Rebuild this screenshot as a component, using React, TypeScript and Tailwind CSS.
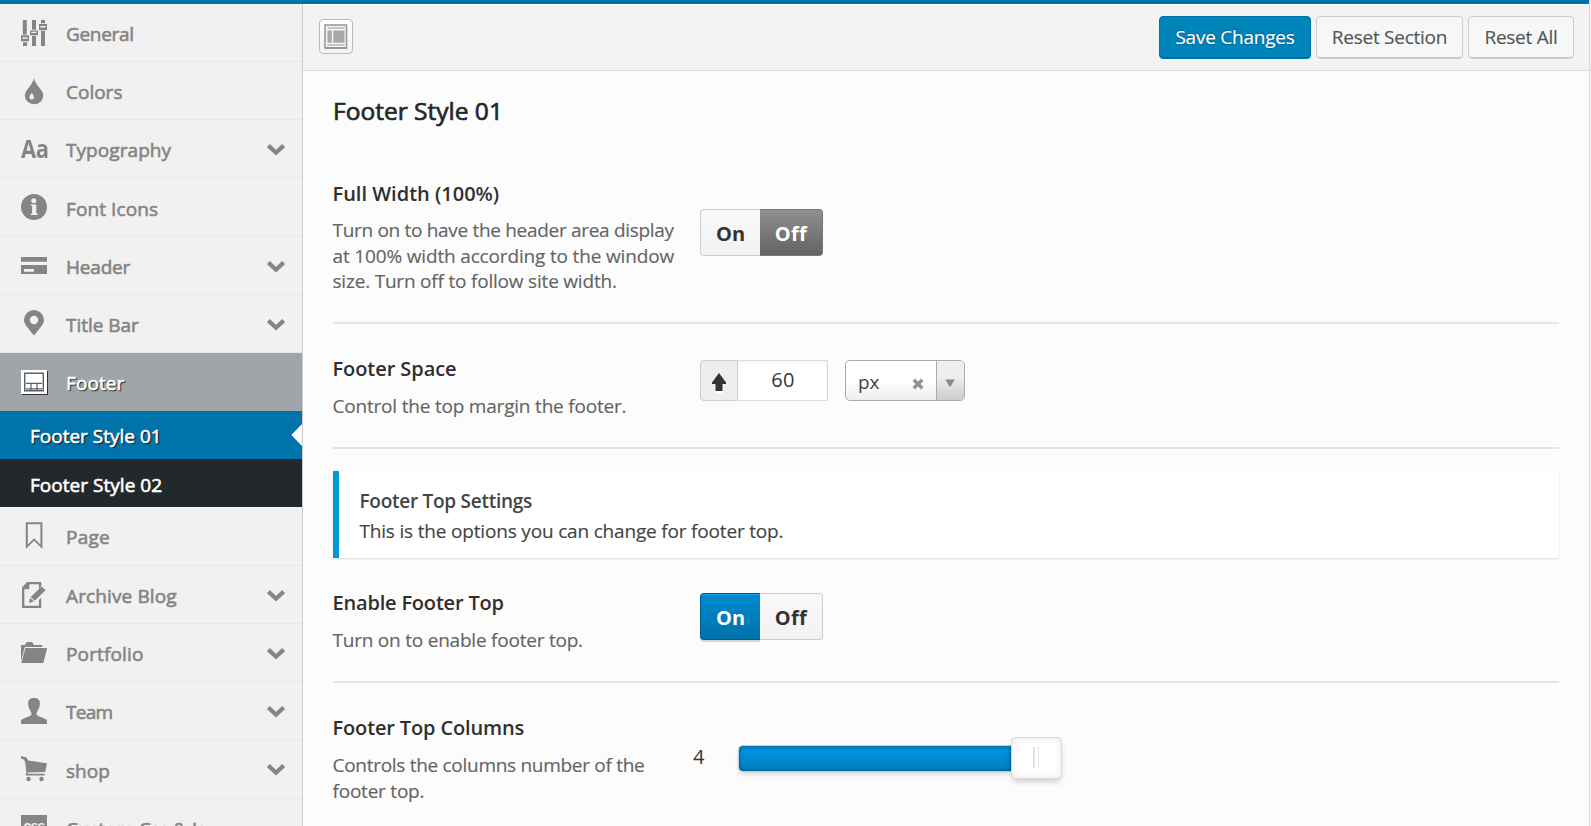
import React, { useState } from "react";

type IconProps = { children: React.ReactNode; className?: string };

function Glyph({ children, className = "" }: IconProps) {
  return (
    <svg width="26" height="26" viewBox="0 0 26 26" fill="currentColor" className={"block overflow-visible " + className}>
      {children}
    </svg>
  );
}

const icons = {
  sliders: (
    <Glyph>
      <path
        fillRule="evenodd"
        d="M1.8 0h4v14.4h-4zM0 15.2h8v6H0zM1.5 17.3v1.4h5v-1.4zM2 22.2h4V26H2zM11 0h4v9.8h-4zM9 10.4h8v4.9H9zM10.3 11.8v1.3h5.2v-1.3zM11 16h4v10h-4zM20 0h4v3.2h-4zM18 4h8v6.2h-8zM19.3 6v1.4h5.2V6zM20 11h4v15h-4z"
      />
    </Glyph>
  ),
  drop: (
    <Glyph>
      <path
        fillRule="evenodd"
        d="M13 0C13.6 3.6 16 7 19 10.6 21.3 13.4 22.3 15.2 22.3 17.4A9.2 8.8 0 0 1 13 26.200A9.200 8.800 0 0 1 3.800 17.400C3.800 15.200 4.800 13.400 7 10.600 10 7 12.400 3.600 13 0zM10.800 14.400C10.500 16 8.400 17.200 8.400 19.200A2.300 2.300 0 0 0 13 19.200C13 17.200 11.100 16 10.800 14.400z"
      />
    </Glyph>
  ),
  type: (
    <span className="-mt-[5px] block w-[27px] font-['Open_Sans',sans-serif] text-[25.5px] leading-[34px] font-bold tracking-[-0.5px]">
      <span className="inline-block origin-left scale-x-[0.86]">Aa</span>
    </span>
  ),
  info: (
    <Glyph>
      <path
        fillRule="evenodd"
        d="M13 0a13 13 0 1 0 0 26a13 13 0 0 0 0-26zM12.800 4.200a2.500 2.500 0 1 1 0 5a2.500 2.500 0 0 1 0-5zM9.600 10.400h5.700v8.800l1.300.8v.9H9.600V20l1.500-.8v-7.100l-1.500-.7z"
      />
    </Glyph>
  ),
  card: (
    <Glyph>
      <path fillRule="evenodd" d="M0 4h26v4.800H0zM0 12h26v9H0zM3 16v2.700h10V16z" />
    </Glyph>
  ),
  pin: (
    <Glyph className="-mt-px">
      <path
        fillRule="evenodd"
        d="M13 0a10 10 0 0 1 10 10C23 14.400 19.500 17 13 25.600 6.500 17 3 14.400 3 10A10 10 0 0 1 13 0zM13 5.800a4.200 4.200 0 1 0 0 8.400a4.200 4.200 0 0 0 0-8.400z"
      />
    </Glyph>
  ),
  footer: (
    <Glyph className="drop-shadow-[1px_1px_0.5px_#333]">
      <path d="M0 1h26v24H0z" />
      <path fill="none" stroke="#5c6064" strokeWidth="1.4" d="M3.700 4.200h18.600v17.600H3.700z" />
      <path stroke="#5c6064" strokeWidth="1.200" d="M5 14.400h16M5 19.800h16M10 15v6M16 15v6" />
    </Glyph>
  ),
  bookmark: (
    <Glyph>
      <path fillRule="evenodd" d="M4.800-.8h16.600V26L13.100 17.800 4.800 26zM6.800 1.200v20.200l6.300-6.200 6.300 6.200V1.200z" />
    </Glyph>
  ),
  edit: (
    <Glyph>
      <path
        fillRule="evenodd"
        d="M6 0h14.200v4.600l-2.300 2.300V2.300H8.300v4.900H3.300v16.500h14.600v-5.600l2.300-2.400V26H1V5.400z"
      />
      <path d="M20.600 4.400l3.900 3.900L13.700 18.700l-4-3.800zM9 15.700l3.900 3.800L8 21z" />
    </Glyph>
  ),
  folder: (
    <Glyph className="translate-y-[2px]">
      <path d="M0 4.300C0 3.300.5 3 1.300 3h2.500L5 1.200C5.500.3 6 0 6.800 0h3.400c1 0 1.500.3 1.900 1.200L12.700 3h8.600v2H3.800L.5 17.500H0z" />
      <path d="M4.400 6h21.800l-3.900 15H.3z" />
    </Glyph>
  ),
  user: (
    <Glyph>
      <path d="M13 0c3.800 0 5.900 1.800 5.900 5.400 0 3.400-1.600 6.300-3 8.800-.9 1.700-.4 3 1.300 3.800l5.600 2.300c2.300.9 3.200 1.600 3.200 2.900V26H0v-2.800c0-1.300.9-2 3.200-2.900L8.800 18c1.700-.8 2.200-2.100 1.300-3.800-1.400-2.500-3-5.400-3-8.800C7.100 1.800 9.200 0 13 0z" />
    </Glyph>
  ),
  cart: (
    <Glyph>
      <path d="M0 0l5.600 1.500L7 4.500 26 7.300 24.200 16 6.500 16.600l.4 1.100h16.800v1.900H4.600l.7-3.300L4.300 7 3.200 3.700 0 2.400z" />
      <circle cx="7.600" cy="23" r="2.200" />
      <circle cx="20.500" cy="23" r="2.200" />
    </Glyph>
  ),
  css: (
    <span className="block h-[26px] w-[26px] bg-current text-center font-['Liberation_Sans',sans-serif] text-[14px] leading-[23px] font-bold tracking-[-0.8px]">
      <span className="text-[#f1f1f1]">css</span>
    </span>
  ),
};

type Item = { label: string; icon: keyof typeof icons; more?: boolean; row: string; track: string };

const before: Item[] = [
  { label: "General", icon: "sliders", row: "h-[58px]", track: "tracking-[-0.33px]" },
  { label: "Colors", icon: "drop", row: "h-[58px]", track: "" },
  { label: "Typography", icon: "type", more: true, row: "h-[58px]", track: "tracking-[0.07px]" },
  { label: "Font Icons", icon: "info", row: "h-[59px]", track: "pt-px tracking-[0.1px]" },
  { label: "Header", icon: "card", more: true, row: "h-[58px]", track: "tracking-[-0.2px]" },
  { label: "Title Bar", icon: "pin", more: true, row: "h-[58px]", track: "tracking-[-0.03px]" },
];

const after: Item[] = [
  { label: "Page", icon: "bookmark", row: "h-[59px]", track: "tracking-[0.2px]" },
  { label: "Archive Blog", icon: "edit", more: true, row: "h-[58px]", track: "tracking-[0.12px]" },
  { label: "Portfolio", icon: "folder", more: true, row: "h-[58px]", track: "tracking-[0.15px]" },
  { label: "Team", icon: "user", more: true, row: "h-[58px]", track: "tracking-[-0.7px]" },
  { label: "shop", icon: "cart", more: true, row: "h-[59px]", track: "pt-px" },
  { label: "Custom Css & Js", icon: "css", row: "h-[58px]", track: "tracking-[-0.1px]" },
];

function Chevron() {
  return (
    <svg width="18" height="12" viewBox="0 0 18 12" className="mt-[7.5px] block">
      <path d="M1.400 1.600L9 8.700l7.600-7.100" fill="none" stroke="currentColor" strokeWidth="4.200" />
    </svg>
  );
}

function MenuRow({ item }: { item: Item }) {
  return (
    <li className={"flex shrink-0 items-start border-b border-[#e7e7e7] pt-4 pr-[17px] pl-[21px] text-[#858585] " + item.row}>
      <span className="w-[45px] shrink-0">{icons[item.icon]}</span>
      <span className={"mt-px flex-1 text-[19px] leading-[26px] [-webkit-text-stroke:0.6px] " + item.track}>{item.label}</span>
      {item.more && <Chevron />}
    </li>
  );
}

function Sidebar() {
  return (
    <nav className="w-[303px] shrink-0 overflow-hidden border-r border-[#ccc] bg-[#f1f1f1]">
      <ul className="flex flex-col">
        {before.map((i) => (
          <MenuRow key={i.label} item={i} />
        ))}
        <li className="shrink-0">
          <div className="flex h-[58px] items-start bg-[#a0a5a9] pt-4 pl-[21px] text-white">
            <span className="w-[45px] shrink-0">{icons.footer}</span>
            <span className="mt-px text-[19px] leading-[26px] tracking-[0.1px] [-webkit-text-stroke:0.6px] [text-shadow:1px_1px_1px_#222,1px_1px_1px_#333]">
              Footer
            </span>
          </div>
          <div className="flex h-12 items-center justify-between bg-[#0073aa] pl-[30px] text-[19px] text-white">
            <span className="pt-[2px] [-webkit-text-stroke:0.6px] [text-shadow:1px_1px_1px_#111,1px_1px_1px_#222]">Footer Style 01</span>
            <svg width="11" height="22" viewBox="0 0 11 22" className="block">
              <path d="M11 0v22L.3 11z" fill="#fcfcfc" />
            </svg>
          </div>
          <div className="flex h-12 items-center bg-[#23282d] pt-[4px] pl-[30px] text-[19px] text-white">
            <span className="tracking-[0.03px] [-webkit-text-stroke:0.6px]">Footer Style 02</span>
          </div>
        </li>
        {after.map((i) => (
          <MenuRow key={i.label} item={i} />
        ))}
      </ul>
    </nav>
  );
}

function ExpandIcon() {
  return (
    <svg width="24" height="25" viewBox="0 0 24 25" className="block">
      <rect x="1" y="1" width="21.500" height="23" fill="#f4f4f4" stroke="#9b9b9b" strokeWidth="1.600" />
      <path d="M1 24h21.500" stroke="#888" strokeWidth="1.200" />
      <path d="M3.500 4h17M3.500 21h17" stroke="#b5b5b5" strokeWidth="1.400" />
      <path d="M3.500 6.500h4.300v12.300H3.500zM9.300 6.500h11.200v12.300H9.300z" fill="#a8a8a8" />
    </svg>
  );
}

function Toolbar() {
  const plain =
    "h-[43px] rounded-[4px] border border-[#ccc] bg-[#f7f7f7] text-[19px] text-[#555] tracking-[-0.25px] shadow-[inset_0_-1px_0_#ccc] [-webkit-text-stroke:0.15px]";
  return (
    <header className="flex h-[67px] shrink-0 items-start justify-between border-t border-b border-t-white border-b-[#dedede] bg-[#f3f3f3] pt-[11px] pr-[15px] pl-4">
      <button className="mt-[3px] flex h-[35px] w-[34px] items-center justify-center rounded-[4px] border border-[#bbb] bg-gradient-to-b from-white to-[#f3f3f3]">
        <ExpandIcon />
      </button>
      <div className="flex gap-[5px]">
        <button className="h-[43px] w-[152px] rounded-[4px] border border-[#0073aa] bg-[#0085ba] text-[19px] tracking-[-0.23px] text-white shadow-[inset_0_-1px_0_#006799] [-webkit-text-stroke:0.15px] [text-shadow:0_-1px_1px_#006799,1px_0_1px_#006799,0_1px_1px_#006799]">
          Save Changes
        </button>
        <button className={"w-[147px] " + plain}>Reset Section</button>
        <button className={"w-[106px] " + plain}>Reset All</button>
      </div>
    </header>
  );
}

function Toggle({ value, onChange }: { value: boolean; onChange: (v: boolean) => void }) {
  const idle = "border-[#ccc] bg-gradient-to-b from-[#f9f9f9] to-[#f2f2f2] text-[#333]";
  return (
    <div className="flex h-[47px] w-[123px] text-[20px] font-bold">
      <button
        onClick={() => onChange(true)}
        className={
          "w-[60px] rounded-l-[4px] border border-r-0 pt-[3px] " +
          (value
            ? "border-[#00598a] bg-gradient-to-b from-[#008bd2] to-[#0072a9] text-white shadow-[inset_0_1px_0_#0ba7f5,0_2px_0_#d5d5d5]"
            : idle)
        }
      >
        On
      </button>
      <button
        onClick={() => onChange(false)}
        className={
          "w-[63px] rounded-r-[4px] border border-l-0 pt-[3px] tracking-[0.3px] " +
          (value ? idle : "border-[#777] bg-gradient-to-b from-[#909090] to-[#636363] text-white")
        }
      >
        Off
      </button>
    </div>
  );
}

type Line = { text: string; track: string };
type FieldProps = {
  title: string;
  titleTrack: string;
  lines: Line[];
  descTop?: string;
  row: string;
  children: React.ReactNode;
};

function Field({ title, titleTrack, lines, descTop = "mt-[12px]", row, children }: FieldProps) {
  return (
    <section className={"flex items-start border-b-2 border-[#e5e5e5] " + row}>
      <div className="w-[350px] shrink-0 pt-[31px]">
        <h3 className={"-ml-[0.5px] text-[20px] leading-[27px] font-semibold text-[#2f2f2f] " + titleTrack}>{title}</h3>
        <p className={"-ml-[0.5px] text-[19px] leading-[25.5px] text-[#646464] [-webkit-text-stroke:0.15px] " + descTop}>
          {lines.map((l) => (
            <span key={l.text} className={"block whitespace-nowrap " + l.track}>
              {l.text}
            </span>
          ))}
        </p>
      </div>
      {children}
    </section>
  );
}

function SpaceInput() {
  return (
    <div className="mt-9 ml-[17px] flex">
      <div className="flex h-[41px] w-[38px] items-center justify-center rounded-l-[4px] border border-[#ccc] bg-[#eee]">
        <svg width="14" height="20" viewBox="0 0 14 20" className="mt-[5px] block">
          <path d="M3 18h8v2H3z" fill="#fff" />
          <path d="M7 0l7 9.500V11h-3.500v7h-7v-7H0V9.500z" fill="#333" />
        </svg>
      </div>
      <div className="h-[41px] w-[90px] border border-l-0 border-[#ddd] bg-white pl-px text-center text-[20px] leading-[38px] tracking-[0.3px] text-[#32373c] shadow-[inset_0_1px_3px_rgba(0,0,0,0.07)]">
        60
      </div>
      <div className="ml-[17px] flex h-[41px] w-[120px] overflow-hidden rounded-[5px] border border-[#aaa] bg-gradient-to-b from-white from-50% to-[#eee]">
        <div className="flex flex-1 items-center justify-between pr-[12px] pl-[12px]">
          <span className="pt-[2px] text-[19px] leading-[26px] tracking-[-0.2px] text-[#444]">px</span>
          <svg width="12" height="12" viewBox="0 0 12 12" className="mt-[7px] block">
            <path d="M1.800 1.800l8.400 8.400M10.200 1.800l-8.400 8.400" stroke="#929292" strokeWidth="3.400" />
          </svg>
        </div>
        <div className="flex w-[28px] items-center justify-center border-l border-[#aaa] bg-gradient-to-b from-[#eee] from-40% to-[#ccc]">
          <svg width="10" height="8" viewBox="0 0 10 8" className="mt-[4px] mr-[2px] block">
            <path d="M.3.500h9.400L5.600 7.500H4.400z" fill="#888" />
          </svg>
        </div>
      </div>
    </div>
  );
}

function Slider() {
  return (
    <div className="ml-[9px] flex items-start pt-[54px]">
      <span className="mt-[6px] w-[46px] pl-px text-[20px] leading-[27px] text-[#333]">4</span>
      <div className="mt-[8px] h-[27px] w-[273px] rounded-l-[5px] border border-r-0 border-[#c3ccd1] bg-gradient-to-b from-[#0090db] from-30% to-[#007fbd] shadow-[inset_0_0_4px_rgba(0,40,70,0.55),0_3px_5px_-1px_rgba(0,0,0,0.16)]" />
      <div className="flex h-[42px] w-[51px] justify-center gap-[3px] rounded-[4px] border border-[#d9d9d9] bg-white pt-[9px] pr-[2px] shadow-[inset_0_0_9px_rgba(0,0,0,0.09),0_4px_7px_-2px_rgba(0,0,0,0.22)]">
        <span className="h-[21px] w-[2px] bg-[#e3e3e3]" />
        <span className="h-[21px] w-px bg-[#e3e3e3]" />
      </div>
    </div>
  );
}

export default function App() {
  const [fullWidth, setFullWidth] = useState(false);
  const [footerTop, setFooterTop] = useState(true);
  return (
    <div className="flex h-[826px] w-[1591px] overflow-hidden bg-[#f1f1f1] font-['Open_Sans','Noto_Sans',sans-serif]">
      <div className="flex w-[1590px] flex-col border-r border-[#d9d9d9]">
        <div className="h-1 shrink-0 bg-[#0073aa]" />
        <div className="flex min-h-0 flex-1">
          <Sidebar />
          <main className="flex min-w-0 flex-1 flex-col bg-[#fcfcfc]">
            <Toolbar />
            <div className="min-h-0 flex-1 overflow-hidden pr-[30px] pl-[30px]">
              <h2 className="h-[78px] pt-[23px] text-[24.5px] leading-[33px] tracking-[0.01px] text-[#23282d] [-webkit-text-stroke:0.7px]">
                Footer Style 01
              </h2>
              <Field
                title="Full Width (100%)"
                titleTrack=""
                row="h-[175px]"
                descTop="mt-[11px]"
                lines={[
                  { text: "Turn on to have the header area display", track: "tracking-[-0.31px]" },
                  { text: "at 100% width according to the window", track: "tracking-[-0.16px]" },
                  { text: "size. Turn off to follow site width.", track: "tracking-[-0.2px]" },
                ]}
              >
                <div className="mt-[60px] ml-[17px]">
                  <Toggle value={fullWidth} onChange={setFullWidth} />
                </div>
              </Field>
              <Field
                title="Footer Space"
                titleTrack="tracking-[-0.07px]"
                row="h-[125px]"
                lines={[{ text: "Control the top margin the footer.", track: "tracking-[-0.2px]" }]}
              >
                <SpaceInput />
              </Field>
              <aside className="mt-[22px] h-[87px] border-l-6 border-[#0099d8] bg-white pt-[17px] pl-[20.5px] text-[19px] leading-[26px] text-[#444] shadow-[0_1px_2px_rgba(0,0,0,0.14)]">
                <p className="font-semibold tracking-[-0.27px]">Footer Top Settings</p>
                <p className="mt-1 tracking-[-0.18px] [-webkit-text-stroke:0.15px]">
                  This is the options you can change for footer top.
                </p>
              </aside>
              <Field
                title="Enable Footer Top"
                titleTrack="tracking-[-0.19px]"
                row="h-[125px]"
                lines={[{ text: "Turn on to enable footer top.", track: "tracking-[-0.22px]" }]}
              >
                <div className="mt-[35px] ml-[17px]">
                  <Toggle value={footerTop} onChange={setFooterTop} />
                </div>
              </Field>
              <Field
                title="Footer Top Columns"
                titleTrack="tracking-[-0.14px]"
                row="h-[175px]"
                lines={[
                  { text: "Controls the columns number of the", track: "tracking-[-0.29px]" },
                  { text: "footer top.", track: "tracking-[-0.22px]" },
                ]}
              >
                <Slider />
              </Field>
            </div>
          </main>
        </div>
      </div>
    </div>
  );
}
